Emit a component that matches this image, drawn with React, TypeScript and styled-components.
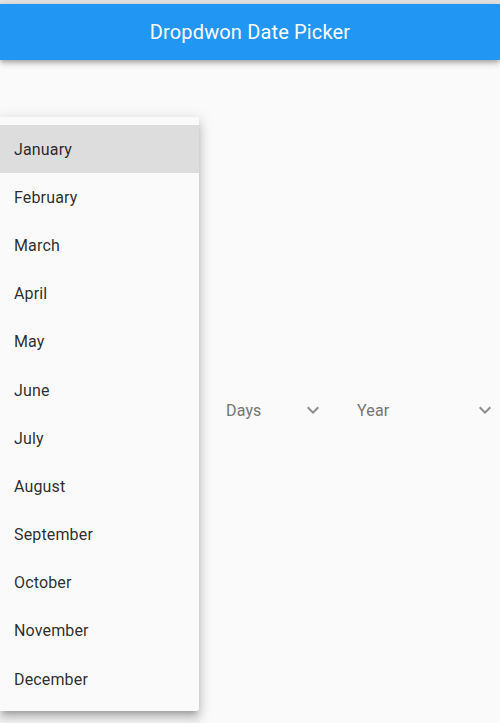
import React from "react";
import styled, { createGlobalStyle } from "styled-components";

const Global = createGlobalStyle`
  html, body { margin: 0; padding: 0; background: #fafafa; }
  body { font-family: Roboto, "Noto Sans", "Liberation Sans", sans-serif; }
  * { box-sizing: border-box; }
`;

const Page = styled.div`
  position: relative;
  width: 500px;
  height: 723px;
  background: #fafafa;
  overflow: hidden;
`;

const StatusStrip = styled.div`
  height: 4px;
  background: #e4e4e4;
`;

const AppBar = styled.header`
  height: 56px;
  background: #2196f3;
  display: flex;
  align-items: center;
  justify-content: center;
  box-shadow: 0 2px 4px -1px rgba(0, 0, 0, 0.2), 0 4px 5px 0 rgba(0, 0, 0, 0.14),
    0 1px 10px 0 rgba(0, 0, 0, 0.12);
  position: relative;
  z-index: 1;
`;

const Title = styled.h1`
  margin: 0;
  color: #fff;
  font-size: 20px;
  font-weight: 400;
  letter-spacing: 0.15px;
`;

const Content = styled.main`
  padding-top: 326px;
`;

const FieldRow = styled.div`
  display: flex;
  align-items: center;
  gap: 32px;
  height: 48px;
`;

const Field = styled.div<{ $w: number }>`
  width: ${(p) => p.$w}px;
  height: 48px;
  display: flex;
  align-items: center;
  justify-content: space-between;
`;

const FieldLabel = styled.span`
  font-size: 16px;
  color: #757575;
  letter-spacing: 0.15px;
`;

const Chevron = styled.svg`
  width: 24px;
  height: 24px;
  fill: #8c8c8c;
  flex: none;
`;

const Menu = styled.ul`
  position: absolute;
  left: 0;
  top: 117px;
  width: 199px;
  margin: 0;
  padding: 8px 0;
  list-style: none;
  background: #fafafa;
  border-radius: 0 2px 2px 0;
  box-shadow: 0 5px 5px -3px rgba(0, 0, 0, 0.2), 0 8px 10px 1px rgba(0, 0, 0, 0.14),
    0 3px 14px 2px rgba(0, 0, 0, 0.12);
  z-index: 2;
`;

const MenuItem = styled.li<{ $active?: boolean }>`
  height: 48.2px;
  display: flex;
  align-items: center;
  padding-left: 14px;
  font-size: 16px;
  letter-spacing: 0.15px;
  color: rgba(0, 0, 0, 0.84);
  background: ${(p) => (p.$active ? "#dddddd" : "transparent")};
`;

const months = [
  "January",
  "February",
  "March",
  "April",
  "May",
  "June",
  "July",
  "August",
  "September",
  "October",
  "November",
  "December",
];

const ExpandMore = () => (
  <Chevron viewBox="0 0 24 24">
    <path d="M16.59 8.59L12 13.17 7.41 8.59 6 10l6 6 6-6z" />
  </Chevron>
);

export default function App() {
  return (
    <Page>
      <Global />
      <StatusStrip />
      <AppBar>
        <Title>Dropdwon Date Picker</Title>
      </AppBar>
      <Content>
        <FieldRow>
          <Field $w={194}>
            <FieldLabel>Month</FieldLabel>
            <ExpandMore />
          </Field>
          <Field $w={99}>
            <FieldLabel>Days</FieldLabel>
            <ExpandMore />
          </Field>
          <Field $w={140}>
            <FieldLabel>Year</FieldLabel>
            <ExpandMore />
          </Field>
        </FieldRow>
      </Content>
      <Menu>
        {months.map((m, i) => (
          <MenuItem key={m} $active={i === 0}>
            {m}
          </MenuItem>
        ))}
      </Menu>
    </Page>
  );
}
